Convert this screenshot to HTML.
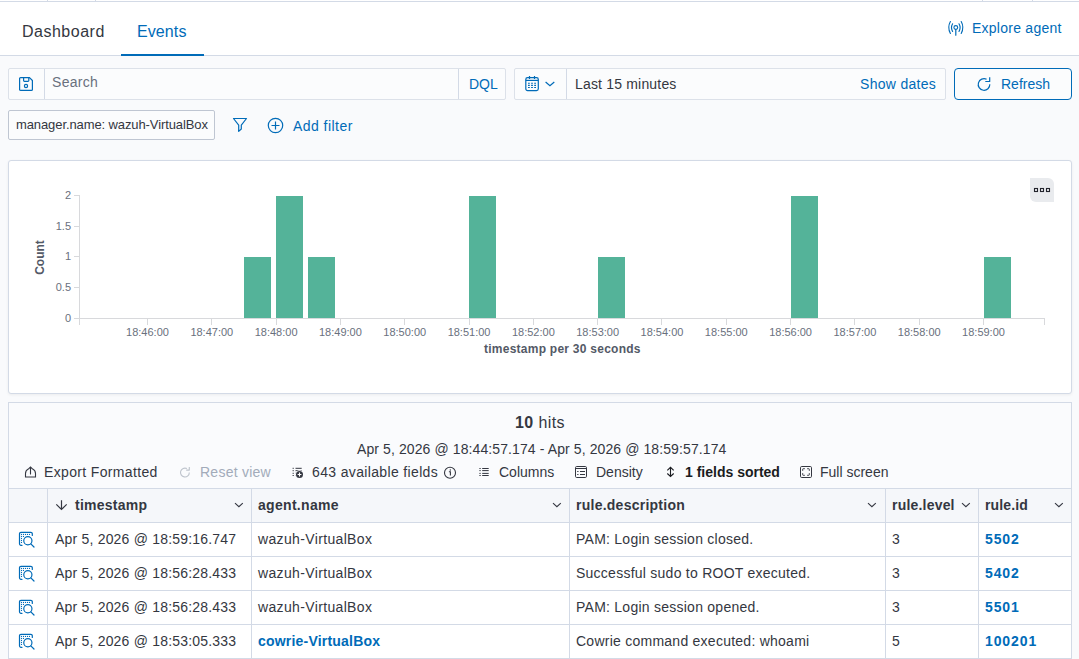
<!DOCTYPE html>
<html><head><meta charset="utf-8"><style>
html,body{margin:0;padding:0;}
body{width:1079px;height:659px;position:relative;overflow:hidden;background:#F9FAFC;font-family:"Liberation Sans", sans-serif;}
.t{position:absolute;white-space:nowrap;}
.r{position:absolute;}
svg.r{overflow:visible;}
</style></head><body>
<div class="r" style="left:0px;top:0px;width:1079px;height:56px;background:#fff;"></div>
<div class="r" style="left:0px;top:1px;width:1079px;height:1px;background:#D3DAE6;"></div>
<div class="r" style="left:47px;top:0px;width:1px;height:1px;background:#D3DAE6;"></div>
<div class="r" style="left:95px;top:0px;width:1px;height:1px;background:#D3DAE6;"></div>
<div class="r" style="left:982px;top:0px;width:1px;height:1px;background:#D3DAE6;"></div>
<div class="r" style="left:1032px;top:0px;width:1px;height:1px;background:#D3DAE6;"></div>
<div class="r" style="left:0px;top:55px;width:1079px;height:1px;background:#D3DAE6;"></div>
<div class="t" style="left:22px;top:23px;font-size:16px;line-height:17px;color:#343741;font-weight:400;letter-spacing:0.5px;">Dashboard</div>
<div class="t" style="left:137px;top:23px;font-size:16px;line-height:17px;color:#006BB8;font-weight:400;letter-spacing:0.1px;">Events</div>
<div class="r" style="left:121px;top:54px;width:83px;height:2px;background:#006BB8;"></div>
<svg class="r" style="left:947px;top:20px" width="18" height="17" viewBox="0 0 18 17" fill="none" stroke="#006BB8" stroke-width="1.1" stroke-linecap="round">
<path d="M3.4 1.6 Q0.1 7.5 3.4 13.5"/><path d="M14.2 1.6 Q17.5 7.5 14.2 13.5"/>
<path d="M5.6 3.8 Q3.4 7.5 5.6 11.4"/><path d="M12 3.8 Q14.2 7.5 12 11.4"/>
<circle cx="8.8" cy="7.5" r="1.9"/><path d="M8.8 9.6 V15.2" stroke-width="1.2"/></svg>
<div class="t" style="left:972px;top:20px;font-size:14px;line-height:16px;color:#006BB8;font-weight:400;letter-spacing:0.25px;">Explore agent</div>
<div class="r" style="left:0px;top:56px;width:1079px;height:603px;background:#F9FAFC;"></div>
<div class="r" style="left:8px;top:68px;width:498px;height:32px;background:#FBFCFD;border:1px solid #DCE1E9;box-sizing:border-box;border-radius:2px;"></div>
<div class="r" style="left:44px;top:69px;width:1px;height:30px;background:#D3DAE6;"></div>
<div class="r" style="left:458px;top:69px;width:1px;height:30px;background:#D3DAE6;"></div>
<svg class="r" style="left:18px;top:76px" width="16" height="16" viewBox="0 0 16 16" fill="none" stroke="#006BB8" stroke-width="1.2">
<path d="M2.6 1.6 H11.5 L14.4 4.5 V13.4 Q14.4 14.4 13.4 14.4 H2.6 Q1.6 14.4 1.6 13.4 V2.6 Q1.6 1.6 2.6 1.6 Z" stroke-linejoin="round"/><path d="M5.6 1.6 V4.6 Q5.6 5.4 6.4 5.4 H10 Q10.8 5.4 10.8 4.6 V1.6"/><circle cx="8" cy="10" r="1.6"/></svg>
<div class="t" style="left:52px;top:74px;font-size:14px;line-height:16px;color:#69707D;font-weight:400;letter-spacing:0.3px;">Search</div>
<div class="t" style="left:469px;top:76px;font-size:14px;line-height:16px;color:#006BB8;font-weight:400;letter-spacing:0px;">DQL</div>
<div class="r" style="left:514px;top:68px;width:432px;height:32px;background:#FBFCFD;border:1px solid #DCE1E9;box-sizing:border-box;border-radius:2px;"></div>
<div class="r" style="left:566px;top:69px;width:1px;height:30px;background:#D3DAE6;"></div>
<svg class="r" style="left:524px;top:75px" width="16" height="16" viewBox="0 0 16 16" fill="none" stroke="#006BB8" stroke-width="1.2">
<rect x="1.8" y="2.6" width="12.5" height="13" rx="1.8"/><path d="M1.8 5.4 H14.3"/><path d="M5.5 0.9 V3.9 M10.5 0.9 V3.9"/>
<path d="M4 8.3h1.8M7.1 8.3h1.8M10.2 8.3h1.8M4 10.4h1.8M7.1 10.4h1.8M10.2 10.4h1.8M4 12.5h1.8M7.1 12.5h1.8M10.2 12.5h1.8" stroke-width="1.1"/></svg>
<svg class="r" style="left:544px;top:80px" width="11" height="8" viewBox="0 0 11 8" fill="none" stroke="#006BB8" stroke-width="1.2"><path d="M1.6 2 L5.95 5.8 L10.3 2"/></svg>
<div class="t" style="left:575px;top:76px;font-size:14px;line-height:16px;color:#343741;font-weight:400;letter-spacing:0.18px;">Last 15 minutes</div>
<div class="t" style="left:860px;top:76px;font-size:14px;line-height:16px;color:#006BB8;font-weight:400;letter-spacing:0.3px;">Show dates</div>
<div class="r" style="left:954px;top:68px;width:118px;height:32px;border:1px solid #006BB8;box-sizing:border-box;border-radius:4px;background:#FBFCFD;"></div>
<svg class="r" style="left:976px;top:76px" width="16" height="16" viewBox="0 0 16 16" fill="none" stroke="#006BB8" stroke-width="1.2">
<path d="M10.6 3.3 A5.8 5.8 0 1 0 13.8 8.2"/><path d="M13.7 1.2 V5.5 H9.3" stroke-linejoin="round"/></svg>
<div class="t" style="left:1001px;top:76px;font-size:14px;line-height:16px;color:#006BB8;font-weight:400;letter-spacing:0px;">Refresh</div>
<div class="r" style="left:8px;top:110px;width:207px;height:30px;background:#FBFCFD;border:1px solid #BFC6D2;box-sizing:border-box;border-radius:2px;"></div>
<div class="t" style="left:16px;top:117px;font-size:13px;line-height:15px;color:#343741;font-weight:400;letter-spacing:-0.1px;">manager.name: wazuh-VirtualBox</div>
<svg class="r" style="left:232px;top:117px" width="16" height="16" viewBox="0 0 16 16" fill="none" stroke="#006BB8" stroke-width="1.2" stroke-linejoin="round">
<path d="M1.5 1.5 H14.5 L9.3 8.2 V12 L6.7 14.4 V8.2 Z"/></svg>
<svg class="r" style="left:267px;top:117px" width="17" height="17" viewBox="0 0 17 17" fill="none" stroke="#006BB8" stroke-width="1.2">
<circle cx="8.5" cy="8.5" r="7.2"/><path d="M8.5 4.5 V12.5 M4.5 8.5 H12.5"/></svg>
<div class="t" style="left:293px;top:118px;font-size:14px;line-height:16px;color:#006BB8;font-weight:400;letter-spacing:0.45px;">Add filter</div>
<div class="r" style="left:8px;top:160px;width:1064px;height:234px;background:#fff;border:1px solid #D3DAE6;box-sizing:border-box;border-radius:3px;box-shadow:0 1px 3px rgba(0,0,0,0.06);"></div>
<div class="r" style="left:1030px;top:178px;width:24px;height:24px;background:#E9EBEE;border-radius:0 6px 0 6px;"></div>
<svg class="r" style="left:1030px;top:178px" width="24" height="24" viewBox="0 0 24 24" fill="none" stroke="#22242C" stroke-width="1.1">
<rect x="4.5" y="10.5" width="3" height="3"/><rect x="10.5" y="10.5" width="3" height="3"/><rect x="16.5" y="10.5" width="3" height="3"/></svg>
<div class="r" style="left:79px;top:195px;width:1px;height:129px;background:#D8D9DC;"></div>
<div class="r" style="left:74px;top:318px;width:5px;height:1px;background:#D8D9DC;"></div>
<div class="t" style="left:30px;width:41px;text-align:right;top:312px;font-size:11px;line-height:12px;color:#69707D;">0</div>
<div class="r" style="left:74px;top:287px;width:5px;height:1px;background:#D8D9DC;"></div>
<div class="t" style="left:30px;width:41px;text-align:right;top:281px;font-size:11px;line-height:12px;color:#69707D;">0.5</div>
<div class="r" style="left:74px;top:256px;width:5px;height:1px;background:#D8D9DC;"></div>
<div class="t" style="left:30px;width:41px;text-align:right;top:250px;font-size:11px;line-height:12px;color:#69707D;">1</div>
<div class="r" style="left:74px;top:226px;width:5px;height:1px;background:#D8D9DC;"></div>
<div class="t" style="left:30px;width:41px;text-align:right;top:220px;font-size:11px;line-height:12px;color:#69707D;">1.5</div>
<div class="r" style="left:74px;top:195px;width:5px;height:1px;background:#D8D9DC;"></div>
<div class="t" style="left:30px;width:41px;text-align:right;top:189px;font-size:11px;line-height:12px;color:#69707D;">2</div>
<div class="t" style="left:22px;top:251px;width:36px;text-align:center;font-size:12px;line-height:13px;font-weight:700;color:#535966;transform:rotate(-90deg);">Count</div>
<div class="r" style="left:79px;top:318px;width:966px;height:1px;background:#D8D9DC;"></div>
<div class="r" style="left:79px;top:318px;width:1px;height:7px;background:#D8D9DC;"></div>
<div class="r" style="left:1044px;top:318px;width:1px;height:7px;background:#D8D9DC;"></div>
<div class="r" style="left:147px;top:318px;width:1px;height:7px;background:#D8D9DC;"></div>
<div class="t" style="left:117.50px;width:60px;text-align:center;top:326px;font-size:11px;line-height:12px;color:#69707D;">18:46:00</div>
<div class="r" style="left:211px;top:318px;width:1px;height:7px;background:#D8D9DC;"></div>
<div class="t" style="left:181.81px;width:60px;text-align:center;top:326px;font-size:11px;line-height:12px;color:#69707D;">18:47:00</div>
<div class="r" style="left:276px;top:318px;width:1px;height:7px;background:#D8D9DC;"></div>
<div class="t" style="left:246.12px;width:60px;text-align:center;top:326px;font-size:11px;line-height:12px;color:#69707D;">18:48:00</div>
<div class="r" style="left:340px;top:318px;width:1px;height:7px;background:#D8D9DC;"></div>
<div class="t" style="left:310.43px;width:60px;text-align:center;top:326px;font-size:11px;line-height:12px;color:#69707D;">18:49:00</div>
<div class="r" style="left:404px;top:318px;width:1px;height:7px;background:#D8D9DC;"></div>
<div class="t" style="left:374.74px;width:60px;text-align:center;top:326px;font-size:11px;line-height:12px;color:#69707D;">18:50:00</div>
<div class="r" style="left:469px;top:318px;width:1px;height:7px;background:#D8D9DC;"></div>
<div class="t" style="left:439.05px;width:60px;text-align:center;top:326px;font-size:11px;line-height:12px;color:#69707D;">18:51:00</div>
<div class="r" style="left:533px;top:318px;width:1px;height:7px;background:#D8D9DC;"></div>
<div class="t" style="left:503.36px;width:60px;text-align:center;top:326px;font-size:11px;line-height:12px;color:#69707D;">18:52:00</div>
<div class="r" style="left:597px;top:318px;width:1px;height:7px;background:#D8D9DC;"></div>
<div class="t" style="left:567.67px;width:60px;text-align:center;top:326px;font-size:11px;line-height:12px;color:#69707D;">18:53:00</div>
<div class="r" style="left:661px;top:318px;width:1px;height:7px;background:#D8D9DC;"></div>
<div class="t" style="left:631.98px;width:60px;text-align:center;top:326px;font-size:11px;line-height:12px;color:#69707D;">18:54:00</div>
<div class="r" style="left:726px;top:318px;width:1px;height:7px;background:#D8D9DC;"></div>
<div class="t" style="left:696.29px;width:60px;text-align:center;top:326px;font-size:11px;line-height:12px;color:#69707D;">18:55:00</div>
<div class="r" style="left:790px;top:318px;width:1px;height:7px;background:#D8D9DC;"></div>
<div class="t" style="left:760.60px;width:60px;text-align:center;top:326px;font-size:11px;line-height:12px;color:#69707D;">18:56:00</div>
<div class="r" style="left:854px;top:318px;width:1px;height:7px;background:#D8D9DC;"></div>
<div class="t" style="left:824.91px;width:60px;text-align:center;top:326px;font-size:11px;line-height:12px;color:#69707D;">18:57:00</div>
<div class="r" style="left:919px;top:318px;width:1px;height:7px;background:#D8D9DC;"></div>
<div class="t" style="left:889.22px;width:60px;text-align:center;top:326px;font-size:11px;line-height:12px;color:#69707D;">18:58:00</div>
<div class="r" style="left:983px;top:318px;width:1px;height:7px;background:#D8D9DC;"></div>
<div class="t" style="left:953.53px;width:60px;text-align:center;top:326px;font-size:11px;line-height:12px;color:#69707D;">18:59:00</div>
<div class="t" style="left:484px;top:342px;font-size:12px;line-height:14px;color:#535966;font-weight:700;letter-spacing:0.25px;">timestamp per 30 seconds</div>
<div class="r" style="left:244px;top:257px;width:27px;height:61px;background:#54B399;"></div>
<div class="r" style="left:276px;top:196px;width:27px;height:122px;background:#54B399;"></div>
<div class="r" style="left:308px;top:257px;width:27px;height:61px;background:#54B399;"></div>
<div class="r" style="left:469px;top:196px;width:27px;height:122px;background:#54B399;"></div>
<div class="r" style="left:598px;top:257px;width:27px;height:61px;background:#54B399;"></div>
<div class="r" style="left:791px;top:196px;width:27px;height:122px;background:#54B399;"></div>
<div class="r" style="left:984px;top:257px;width:27px;height:61px;background:#54B399;"></div>
<div class="r" style="left:8px;top:402px;width:1064px;height:257px;background:#FAFBFD;border:1px solid #D3DAE6;border-bottom:none;box-sizing:border-box;"></div>
<div class="t" style="left:515px;top:414px;font-size:16px;line-height:17px;color:#343741;font-weight:400;letter-spacing:0.4px;"><b>10</b> hits</div>
<div class="t" style="left:357px;top:441px;font-size:14px;line-height:16px;color:#343741;font-weight:400;letter-spacing:0.1px;">Apr 5, 2026 @ 18:44:57.174 - Apr 5, 2026 @ 18:59:57.174</div>
<svg class="r" style="left:24px;top:465px" width="13" height="13" viewBox="0 0 13 13" fill="none" stroke="#343741" stroke-width="1.1" stroke-linecap="round">
<path d="M4.3 4 A5 5 0 0 0 1.5 8.5 V12 H11.5 V8.5 A5 5 0 0 0 8.7 4"/><path d="M6.5 2 V9 M4.8 3.7 L6.5 2 L8.2 3.7"/></svg>
<div class="t" style="left:44px;top:464px;font-size:14px;line-height:16px;color:#343741;font-weight:400;letter-spacing:0.35px;">Export Formatted</div>
<svg class="r" style="left:179px;top:466px" width="12" height="12" viewBox="0 0 12 12" fill="none" stroke="#BDC3CC" stroke-width="1.1"><path d="M7.9 2.6 A4.4 4.4 0 1 0 10.3 6.4"/><path d="M10.3 1.1 V4.1 H7.2" stroke-linejoin="round"/></svg>
<div class="t" style="left:200px;top:464px;font-size:14px;line-height:16px;color:#A2ABBA;font-weight:400;letter-spacing:0.25px;">Reset view</div>
<svg class="r" style="left:291px;top:465px" width="13" height="13" viewBox="0 0 13 13" fill="none" stroke="#343741" stroke-width="1"><path d="M1.6 3.3h1.2M4.5 3.3h6.2M1.6 5.7h1.2M4.5 5.7h6.2M1.6 8.3h1.2M4.5 8.3h1.5M1.6 10.5h1.2M4.5 10.5h1.5"/><circle cx="8.5" cy="9.5" r="4.3" fill="#FAFBFD" stroke="none"/><circle cx="8.5" cy="9.5" r="3.5" fill="#343741" stroke="none"/><path d="M8.5 7.6v3.8M6.6 9.5h3.8" stroke="#fff" stroke-width="1.1"/></svg>
<div class="t" style="left:312px;top:464px;font-size:14px;line-height:16px;color:#343741;font-weight:400;letter-spacing:0.35px;">643 available fields</div>
<svg class="r" style="left:444px;top:466px" width="13" height="13" viewBox="0 0 13 13" fill="none" stroke="#343741" stroke-width="1.1"><circle cx="6" cy="6.8" r="5.5"/><path d="M4.9 5.8 H6.4 V9.6" /><circle cx="6.3" cy="4" r="0.7" fill="#343741" stroke="none"/></svg>
<svg class="r" style="left:479px;top:466px" width="11" height="11" viewBox="0 0 11 11" fill="none" stroke="#343741" stroke-width="1"><path d="M0.4 2.5h1.3M3.2 2.5h6.5M0.4 4.6h1.3M3.2 4.6h6.5M0.4 7.4h1.3M3.2 7.4h6.5M0.4 9.5h1.3M3.2 9.5h6.5"/></svg>
<div class="t" style="left:499px;top:464px;font-size:14px;line-height:16px;color:#343741;font-weight:400;letter-spacing:0px;">Columns</div>
<svg class="r" style="left:575px;top:466px" width="12" height="12" viewBox="0 0 12 12" fill="none" stroke="#343741" stroke-width="1"><rect x="0.5" y="0.5" width="11" height="11" rx="1.2"/><path d="M0.5 2.5h11M2.2 5.5h1.3M5 5.5h5M2.2 8.5h1.3M5 8.5h5"/></svg>
<div class="t" style="left:596px;top:464px;font-size:14px;line-height:16px;color:#343741;font-weight:400;letter-spacing:0px;">Density</div>
<svg class="r" style="left:666px;top:466px" width="9" height="12" viewBox="0 0 9 12" fill="none" stroke="#1a1c21" stroke-width="1.1"><path d="M1.3 4.3 L4.5 1.3 L7.7 4.3M1.3 7.5 L4.5 10.5 L7.7 7.5M4.5 1.5v8.8"/></svg>
<div class="t" style="left:685px;top:464px;font-size:14px;line-height:16px;color:#1a1c21;font-weight:700;letter-spacing:0px;">1 fields sorted</div>
<svg class="r" style="left:800px;top:466px" width="12" height="12" viewBox="0 0 12 12" fill="none" stroke="#343741" stroke-width="1"><rect x="0.5" y="0.5" width="11" height="11" rx="1.2"/><path d="M2.7 4.8V3.3Q2.7 2.7 3.3 2.7H4.8M7.2 2.7H8.7Q9.3 2.7 9.3 3.3V4.8M9.3 7.2V8.7Q9.3 9.3 8.7 9.3H7.2M4.8 9.3H3.3Q2.7 9.3 2.7 8.7V7.2"/></svg>
<div class="t" style="left:820px;top:464px;font-size:14px;line-height:16px;color:#343741;font-weight:400;letter-spacing:0px;">Full screen</div>
<div class="r" style="left:9px;top:488px;width:1062px;height:34px;background:#F5F7FA;"></div>
<div class="r" style="left:9px;top:522px;width:1062px;height:136px;background:#fff;"></div>
<div class="r" style="left:9px;top:488px;width:1062px;height:1px;background:#D3DAE6;"></div>
<div class="r" style="left:9px;top:522px;width:1062px;height:1px;background:#D3DAE6;"></div>
<div class="r" style="left:9px;top:556px;width:1062px;height:1px;background:#D3DAE6;"></div>
<div class="r" style="left:9px;top:590px;width:1062px;height:1px;background:#D3DAE6;"></div>
<div class="r" style="left:9px;top:624px;width:1062px;height:1px;background:#D3DAE6;"></div>
<div class="r" style="left:9px;top:658px;width:1062px;height:1px;background:#D3DAE6;"></div>
<div class="r" style="left:47px;top:488px;width:1px;height:171px;background:#D3DAE6;"></div>
<div class="r" style="left:251px;top:488px;width:1px;height:171px;background:#D3DAE6;"></div>
<div class="r" style="left:569px;top:488px;width:1px;height:171px;background:#D3DAE6;"></div>
<div class="r" style="left:885px;top:488px;width:1px;height:171px;background:#D3DAE6;"></div>
<div class="r" style="left:978px;top:488px;width:1px;height:171px;background:#D3DAE6;"></div>
<div class="r" style="left:1071px;top:402px;width:1px;height:257px;background:#D3DAE6;"></div>
<svg class="r" style="left:55px;top:498px" width="13" height="13" viewBox="0 0 13 13" fill="none" stroke="#343741" stroke-width="1.2"><path d="M6.5 2.2V11.4M1.3 6.3 L6.5 11.5 L11.7 6.3"/></svg>
<div class="t" style="left:75px;top:497px;font-size:14px;line-height:16px;color:#343741;font-weight:700;letter-spacing:0.25px;">timestamp</div>
<svg class="r" style="left:234px;top:502px" width="10" height="7" viewBox="0 0 10 7" fill="none" stroke="#343741" stroke-width="1.1"><path d="M1 1.1 L4.9 4.7 L8.8 1.1"/></svg>
<div class="t" style="left:258px;top:497px;font-size:14px;line-height:16px;color:#343741;font-weight:700;letter-spacing:0.3px;">agent.name</div>
<svg class="r" style="left:552px;top:502px" width="10" height="7" viewBox="0 0 10 7" fill="none" stroke="#343741" stroke-width="1.1"><path d="M1 1.1 L4.9 4.7 L8.8 1.1"/></svg>
<div class="t" style="left:576px;top:497px;font-size:14px;line-height:16px;color:#343741;font-weight:700;letter-spacing:0.25px;">rule.description</div>
<svg class="r" style="left:867px;top:502px" width="10" height="7" viewBox="0 0 10 7" fill="none" stroke="#343741" stroke-width="1.1"><path d="M1 1.1 L4.9 4.7 L8.8 1.1"/></svg>
<div class="t" style="left:892px;top:497px;font-size:14px;line-height:16px;color:#343741;font-weight:700;letter-spacing:0.2px;">rule.level</div>
<svg class="r" style="left:961px;top:502px" width="10" height="7" viewBox="0 0 10 7" fill="none" stroke="#343741" stroke-width="1.1"><path d="M1 1.1 L4.9 4.7 L8.8 1.1"/></svg>
<div class="t" style="left:985px;top:497px;font-size:14px;line-height:16px;color:#343741;font-weight:700;letter-spacing:0.15px;">rule.id</div>
<svg class="r" style="left:1054px;top:502px" width="10" height="7" viewBox="0 0 10 7" fill="none" stroke="#343741" stroke-width="1.1"><path d="M1 1.1 L4.9 4.7 L8.8 1.1"/></svg>
<svg class="r" style="left:18px;top:531px" width="17" height="17" viewBox="0 0 17 17" fill="none" stroke="#006BB8" stroke-width="1.2" stroke-linecap="round">
<path d="M4 14.3 H3 A1.5 1.5 0 0 1 1.5 12.8 V2.8 A1.5 1.5 0 0 1 3 1.3 H12.8 A1.5 1.5 0 0 1 14.3 2.8 V4.5"/>
<g fill="#006BB8" stroke="none"><circle cx="3.5" cy="3.4" r="0.6"/><circle cx="5.5" cy="3.4" r="0.6"/><circle cx="7.5" cy="3.4" r="0.6"/><circle cx="9.5" cy="3.4" r="0.6"/><circle cx="11.5" cy="3.4" r="0.6"/><circle cx="3.5" cy="5.4" r="0.6"/><circle cx="3.5" cy="7.4" r="0.6"/><circle cx="3.5" cy="9.4" r="0.6"/><circle cx="3.5" cy="11.4" r="0.6"/><circle cx="5.5" cy="5.4" r="0.6"/></g>
<circle cx="9.85" cy="9.7" r="4.1"/><path d="M12.8 12.8 L16 16"/></svg>
<div class="t" style="left:55px;top:531px;font-size:14px;line-height:16px;color:#343741;font-weight:400;letter-spacing:0.2px;">Apr 5, 2026 @ 18:59:16.747</div>
<div class="t" style="left:258px;top:531px;font-size:14px;line-height:16px;color:#343741;font-weight:400;letter-spacing:0.35px;">wazuh-VirtualBox</div>
<div class="t" style="left:576px;top:531px;font-size:14px;line-height:16px;color:#343741;font-weight:400;letter-spacing:0.25px;">PAM: Login session closed.</div>
<div class="t" style="left:892px;top:531px;font-size:14px;line-height:16px;color:#343741;font-weight:400;letter-spacing:0px;">3</div>
<div class="t" style="left:985px;top:531px;font-size:14px;line-height:16px;color:#006BB8;font-weight:700;letter-spacing:0.9px;">5502</div>
<svg class="r" style="left:18px;top:565px" width="17" height="17" viewBox="0 0 17 17" fill="none" stroke="#006BB8" stroke-width="1.2" stroke-linecap="round">
<path d="M4 14.3 H3 A1.5 1.5 0 0 1 1.5 12.8 V2.8 A1.5 1.5 0 0 1 3 1.3 H12.8 A1.5 1.5 0 0 1 14.3 2.8 V4.5"/>
<g fill="#006BB8" stroke="none"><circle cx="3.5" cy="3.4" r="0.6"/><circle cx="5.5" cy="3.4" r="0.6"/><circle cx="7.5" cy="3.4" r="0.6"/><circle cx="9.5" cy="3.4" r="0.6"/><circle cx="11.5" cy="3.4" r="0.6"/><circle cx="3.5" cy="5.4" r="0.6"/><circle cx="3.5" cy="7.4" r="0.6"/><circle cx="3.5" cy="9.4" r="0.6"/><circle cx="3.5" cy="11.4" r="0.6"/><circle cx="5.5" cy="5.4" r="0.6"/></g>
<circle cx="9.85" cy="9.7" r="4.1"/><path d="M12.8 12.8 L16 16"/></svg>
<div class="t" style="left:55px;top:565px;font-size:14px;line-height:16px;color:#343741;font-weight:400;letter-spacing:0.2px;">Apr 5, 2026 @ 18:56:28.433</div>
<div class="t" style="left:258px;top:565px;font-size:14px;line-height:16px;color:#343741;font-weight:400;letter-spacing:0.35px;">wazuh-VirtualBox</div>
<div class="t" style="left:576px;top:565px;font-size:14px;line-height:16px;color:#343741;font-weight:400;letter-spacing:0.25px;">Successful sudo to ROOT executed.</div>
<div class="t" style="left:892px;top:565px;font-size:14px;line-height:16px;color:#343741;font-weight:400;letter-spacing:0px;">3</div>
<div class="t" style="left:985px;top:565px;font-size:14px;line-height:16px;color:#006BB8;font-weight:700;letter-spacing:0.9px;">5402</div>
<svg class="r" style="left:18px;top:599px" width="17" height="17" viewBox="0 0 17 17" fill="none" stroke="#006BB8" stroke-width="1.2" stroke-linecap="round">
<path d="M4 14.3 H3 A1.5 1.5 0 0 1 1.5 12.8 V2.8 A1.5 1.5 0 0 1 3 1.3 H12.8 A1.5 1.5 0 0 1 14.3 2.8 V4.5"/>
<g fill="#006BB8" stroke="none"><circle cx="3.5" cy="3.4" r="0.6"/><circle cx="5.5" cy="3.4" r="0.6"/><circle cx="7.5" cy="3.4" r="0.6"/><circle cx="9.5" cy="3.4" r="0.6"/><circle cx="11.5" cy="3.4" r="0.6"/><circle cx="3.5" cy="5.4" r="0.6"/><circle cx="3.5" cy="7.4" r="0.6"/><circle cx="3.5" cy="9.4" r="0.6"/><circle cx="3.5" cy="11.4" r="0.6"/><circle cx="5.5" cy="5.4" r="0.6"/></g>
<circle cx="9.85" cy="9.7" r="4.1"/><path d="M12.8 12.8 L16 16"/></svg>
<div class="t" style="left:55px;top:599px;font-size:14px;line-height:16px;color:#343741;font-weight:400;letter-spacing:0.2px;">Apr 5, 2026 @ 18:56:28.433</div>
<div class="t" style="left:258px;top:599px;font-size:14px;line-height:16px;color:#343741;font-weight:400;letter-spacing:0.35px;">wazuh-VirtualBox</div>
<div class="t" style="left:576px;top:599px;font-size:14px;line-height:16px;color:#343741;font-weight:400;letter-spacing:0.25px;">PAM: Login session opened.</div>
<div class="t" style="left:892px;top:599px;font-size:14px;line-height:16px;color:#343741;font-weight:400;letter-spacing:0px;">3</div>
<div class="t" style="left:985px;top:599px;font-size:14px;line-height:16px;color:#006BB8;font-weight:700;letter-spacing:0.9px;">5501</div>
<svg class="r" style="left:18px;top:633px" width="17" height="17" viewBox="0 0 17 17" fill="none" stroke="#006BB8" stroke-width="1.2" stroke-linecap="round">
<path d="M4 14.3 H3 A1.5 1.5 0 0 1 1.5 12.8 V2.8 A1.5 1.5 0 0 1 3 1.3 H12.8 A1.5 1.5 0 0 1 14.3 2.8 V4.5"/>
<g fill="#006BB8" stroke="none"><circle cx="3.5" cy="3.4" r="0.6"/><circle cx="5.5" cy="3.4" r="0.6"/><circle cx="7.5" cy="3.4" r="0.6"/><circle cx="9.5" cy="3.4" r="0.6"/><circle cx="11.5" cy="3.4" r="0.6"/><circle cx="3.5" cy="5.4" r="0.6"/><circle cx="3.5" cy="7.4" r="0.6"/><circle cx="3.5" cy="9.4" r="0.6"/><circle cx="3.5" cy="11.4" r="0.6"/><circle cx="5.5" cy="5.4" r="0.6"/></g>
<circle cx="9.85" cy="9.7" r="4.1"/><path d="M12.8 12.8 L16 16"/></svg>
<div class="t" style="left:55px;top:633px;font-size:14px;line-height:16px;color:#343741;font-weight:400;letter-spacing:0.2px;">Apr 5, 2026 @ 18:53:05.333</div>
<div class="t" style="left:258px;top:633px;font-size:14px;line-height:16px;color:#006BB8;font-weight:700;letter-spacing:0.2px;">cowrie-VirtualBox</div>
<div class="t" style="left:576px;top:633px;font-size:14px;line-height:16px;color:#343741;font-weight:400;letter-spacing:0.25px;">Cowrie command executed: whoami</div>
<div class="t" style="left:892px;top:633px;font-size:14px;line-height:16px;color:#343741;font-weight:400;letter-spacing:0px;">5</div>
<div class="t" style="left:985px;top:633px;font-size:14px;line-height:16px;color:#006BB8;font-weight:700;letter-spacing:0.9px;">100201</div>
</body></html>
